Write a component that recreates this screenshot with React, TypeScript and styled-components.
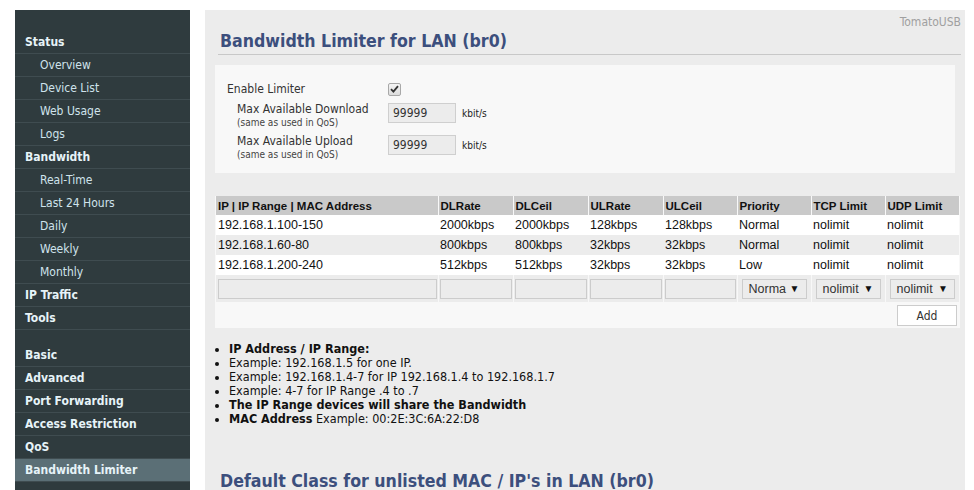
import React from "react";
import styled, { createGlobalStyle } from "styled-components";

const Global = createGlobalStyle`
  html, body { margin: 0; padding: 0; background: #fff; }
  body { font-family: "DejaVu Sans Condensed", "DejaVu Sans", sans-serif; font-size: 12px; color: #222; }
  * { box-sizing: border-box; }
`;

const UI = `"DejaVu Sans Condensed", "DejaVu Sans", sans-serif`;
const ARIAL = `"Liberation Sans", Arial, sans-serif`;

const Page = styled.div`
  display: flex;
  align-items: stretch;
  padding: 10px 0 0 15px;
  height: 490px;
  overflow: hidden;
`;

const Sidebar = styled.nav`
  width: 175px;
  flex: none;
  background: #2f3b3e;
  padding-top: 21px;
  display: flex;
  flex-direction: column;
`;

const NavItem = styled.div<{ $sub?: boolean; $active?: boolean }>`
  height: 23px;
  line-height: 22px;
  border-bottom: 1px solid #3f4c50;
  padding-left: ${(p) => (p.$sub ? 25 : 10)}px;
  font-family: ${UI};
  font-size: 12px;
  font-weight: ${(p) => (p.$sub ? 400 : 700)};
  color: ${(p) => (p.$sub ? "#cfe3ec" : "#e6f3f8")};
  background: ${(p) => (p.$active ? "#5b6f76" : "transparent")};
  white-space: nowrap;
`;

const NavGap = styled.div`
  height: 14px;
`;

const Main = styled.main`
  width: 760px;
  flex: none;
  margin-left: 15px;
  background: #ececec;
  padding: 0 4px 0 10px;
  display: flex;
  flex-direction: column;
`;

const Brand = styled.div`
  align-self: flex-end;
  font-family: ${UI};
  font-size: 12px;
  color: #a0a0a0;
  margin-top: 5px;
  height: 14px;
  line-height: 14px;
`;

const SectionTitle = styled.h3<{ $top?: number }>`
  margin: ${(p) => p.$top ?? 0}px 0 0 3px;
  padding: 0 0 0 2px;
  font-family: ${UI};
  font-size: 17.6px;
  font-weight: 700;
  color: #3c4f7d;
  height: 27px;
  line-height: 25px;
  border-bottom: ${(p) => (p.$top ? "none" : "1px solid #c8c8c8")};
  white-space: nowrap;
`;

const Section = styled.section<{ $top: number; $right: number }>`
  margin-top: ${(p) => p.$top}px;
  margin-right: ${(p) => p.$right}px;
  background: #f8f8f8;
`;

const SettingsGrid = styled.div`
  display: grid;
  grid-template-columns: 173px auto;
  align-items: center;
  padding: 16px 0 12px 0;
`;

const Label = styled.div<{ $indent?: boolean }>`
  padding-left: ${(p) => (p.$indent ? 22 : 12)}px;
  padding-top: ${(p) => (p.$indent ? 5 : 0)}px;
  font-family: ${UI};
  font-size: 12px;
  color: #333;
  line-height: 15px;
`;

const SubNote = styled.div`
  font-size: 10px;
  color: #444;
  line-height: 12px;
`;

const FieldCell = styled.div`
  display: flex;
  align-items: center;
  gap: 6px;
  height: 32px;
`;

const CheckCell = styled(FieldCell)`
  height: 16px;
`;

const Check = styled.span`
  width: 13px;
  height: 13px;
  border: 1px solid #a8a8a8;
  border-radius: 2px;
  background: linear-gradient(#f4f4f4, #dcdcdc);
  display: inline-flex;
  align-items: center;
  justify-content: center;
`;

const NumInput = styled.div`
  width: 68px;
  height: 20px;
  border: 1px solid #cfcfcf;
  background: #ececec;
  font-family: ${UI};
  font-size: 12px;
  line-height: 18px;
  padding-left: 4px;
  color: #333;
`;

const Unit = styled.span`
  font-family: ${UI};
  font-size: 10px;
  color: #222;
`;

const Table = styled.table`
  border-collapse: collapse;
  width: 743px;
  margin-left: 1px;
  font-family: ${ARIAL};
  font-size: 12.5px;
  color: #111;
`;

const Th = styled.th<{ $w: number }>`
  width: ${(p) => p.$w}px;
  background: #c9c9c9;
  text-align: left;
  font-weight: 700;
  font-size: 11.5px;
  height: 19px;
  padding: 0 2px;
  border-left: 1px solid #f8f8f8;
  &:first-child { border-left: none; }
`;

const Tr = styled.tr<{ $alt?: boolean }>`
  background: ${(p) => (p.$alt ? "#ececec" : "#fff")};
`;

const Td = styled.td`
  height: 20px;
  padding: 0 2px;
  white-space: nowrap;
`;

const EditTd = styled.td`
  height: 27px;
  padding: 0 1px;
  background: #ececec;
  border-left: 1px solid #f8f8f8;
  &:first-child { border-left: none; padding-left: 2px; }
`;

const EditInput = styled.div`
  height: 20px;
  border: 1px solid #cccccc;
  background: #ececec;
`;

const Select = styled.div`
  height: 20px;
  margin: 0 3px;
  border: 1px solid #cccccc;
  background: #ececec;
  display: flex;
  align-items: center;
  justify-content: space-between;
  padding: 0 6px 0 6px;
  font-family: ${ARIAL};
  font-size: 12.5px;
  color: #333;
  overflow: hidden;
`;

const Arrow = styled.span`
  font-size: 10px;
  color: #111;
`;

const ButtonRow = styled.div`
  display: flex;
  justify-content: flex-end;
  padding: 3px 3px 2px 0;
`;

const Button = styled.button`
  width: 60px;
  height: 21px;
  border: 1px solid #cccccc;
  background: #fff;
  font-family: ${UI};
  font-size: 12px;
  color: #333;
  padding: 0;
`;

const Notes = styled.ul`
  margin: 14px 0 0 0;
  padding: 0 0 0 14px;
  list-style: disc;
  font-family: ${UI};
  font-size: 12.5px;
  color: #111;
  line-height: 14px;
  li::marker { font-size: 12px; }
`;

const B = styled.b`
  font-weight: 700;
`;

const navTop: [string, boolean][] = [
  ["Status", false],
  ["Overview", true],
  ["Device List", true],
  ["Web Usage", true],
  ["Logs", true],
  ["Bandwidth", false],
  ["Real-Time", true],
  ["Last 24 Hours", true],
  ["Daily", true],
  ["Weekly", true],
  ["Monthly", true],
  ["IP Traffic", false],
  ["Tools", false],
];
const navBottom = ["Basic", "Advanced", "Port Forwarding", "Access Restriction", "QoS", "Bandwidth Limiter"];

const cols: [string, number][] = [
  ["IP | IP Range | MAC Address", 222],
  ["DLRate", 75],
  ["DLCeil", 75],
  ["ULRate", 75],
  ["ULCeil", 74],
  ["Priority", 74],
  ["TCP Limit", 74],
  ["UDP Limit", 74],
];

const rows = [
  ["192.168.1.100-150", "2000kbps", "2000kbps", "128kbps", "128kbps", "Normal", "nolimit", "nolimit"],
  ["192.168.1.60-80", "800kbps", "800kbps", "32kbps", "32kbps", "Normal", "nolimit", "nolimit"],
  ["192.168.1.200-240", "512kbps", "512kbps", "32kbps", "32kbps", "Low", "nolimit", "nolimit"],
];

export default function App() {
  return (
    <>
      <Global />
      <Page>
        <Sidebar>
          {navTop.map(([t, sub]) => (
            <NavItem key={t} $sub={sub}>{t}</NavItem>
          ))}
          <NavGap />
          {navBottom.map((t) => (
            <NavItem key={t} $active={t === "Bandwidth Limiter"}>{t}</NavItem>
          ))}
        </Sidebar>
        <Main>
          <Brand>TomatoUSB</Brand>
          <SectionTitle>Bandwidth Limiter for LAN (br0)</SectionTitle>
          <Section $top={10} $right={6}>
            <SettingsGrid>
              <Label>Enable Limiter</Label>
              <CheckCell>
                <Check>
                  <svg width="9" height="8" viewBox="0 0 9 8">
                    <path d="M1 4.2 L3.4 6.6 L8 1.2" fill="none" stroke="#333" strokeWidth="1.8" />
                  </svg>
                </Check>
              </CheckCell>
              <Label $indent>
                Max Available Download
                <SubNote>(same as used in QoS)</SubNote>
              </Label>
              <FieldCell>
                <NumInput>99999</NumInput>
                <Unit>kbit/s</Unit>
              </FieldCell>
              <Label $indent>
                Max Available Upload
                <SubNote>(same as used in QoS)</SubNote>
              </Label>
              <FieldCell>
                <NumInput>99999</NumInput>
                <Unit>kbit/s</Unit>
              </FieldCell>
            </SettingsGrid>
          </Section>
          <Section $top={23} $right={1}>
            <Table>
              <thead>
                <tr>
                  {cols.map(([c, w]) => (
                    <Th key={c} $w={w}>{c}</Th>
                  ))}
                </tr>
              </thead>
              <tbody>
                {rows.map((r, i) => (
                  <Tr key={i} $alt={i === 1}>
                    {r.map((c, j) => (
                      <Td key={j}>{c}</Td>
                    ))}
                  </Tr>
                ))}
                <tr>
                  {[0, 1, 2, 3, 4].map((k) => (
                    <EditTd key={k}>
                      <EditInput />
                    </EditTd>
                  ))}
                  {["Norma", "nolimit", "nolimit"].map((v, k) => (
                    <EditTd key={"s" + k}>
                      <Select>
                        <span>{v}</span>
                        <Arrow>▼</Arrow>
                      </Select>
                    </EditTd>
                  ))}
                </tr>
              </tbody>
            </Table>
            <ButtonRow>
              <Button>Add</Button>
            </ButtonRow>
          </Section>
          <Notes>
            <li><B>IP Address / IP Range:</B></li>
            <li>Example: 192.168.1.5 for one IP.</li>
            <li>Example: 192.168.1.4-7 for IP 192.168.1.4 to 192.168.1.7</li>
            <li>Example: 4-7 for IP Range .4 to .7</li>
            <li><B>The IP Range devices will share the Bandwidth</B></li>
            <li><B>MAC Address</B> Example: 00:2E:3C:6A:22:D8</li>
          </Notes>
          <SectionTitle $top={43}>Default Class for unlisted MAC / IP's in LAN (br0)</SectionTitle>
        </Main>
      </Page>
    </>
  );
}
